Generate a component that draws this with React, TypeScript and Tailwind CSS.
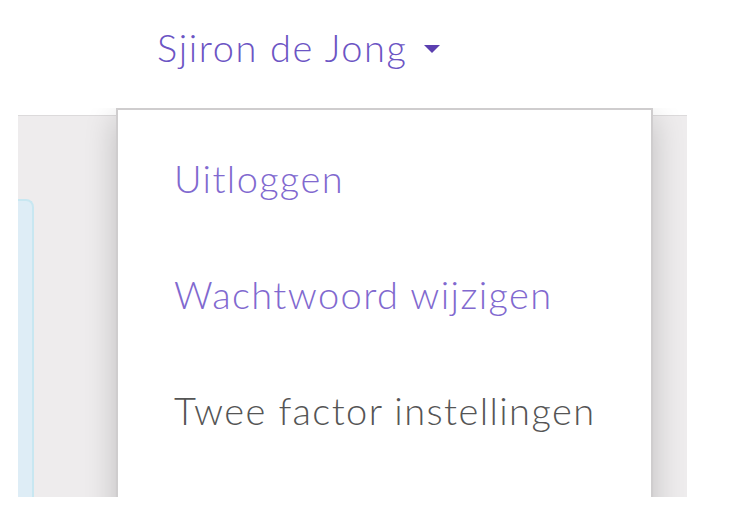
import React from 'react'

const items = [
    { label: 'Uitloggen', active: true },
    { label: 'Wachtwoord wijzigen', active: true },
    { label: 'Twee factor instellingen', active: false },
]

export default function App() {
    return (
        <div className="h-[520px] w-[732px] overflow-hidden bg-white font-['Lato',sans-serif] font-light">
            {/* top bar with user name */}
            <div className="flex h-[108px] items-start pl-[157px] pt-[21px]">
                <button className="flex items-center gap-[16px] text-[38px] leading-[52px] tracking-[1.6px] text-[#6c55c4]">
                    <span>Sjiron de Jong</span>
                    <span className="mt-[4px] h-0 w-0 border-x-[8px] border-t-[8px] border-x-transparent border-t-[#5b3fb0]" />
                </button>
            </div>

            {/* page body, cropped at the bottom */}
            <div className="relative h-[389px] overflow-hidden">
                <div className="ml-[18px] mr-[45px] mt-[7px] h-full border-t border-[#dcdadb] bg-[#eeeced] pt-[83px]">
                    <div className="h-full w-[16px] rounded-tr-[8px] border-2 border-b-0 border-l-0 border-[#c8e7f1] bg-[#deedf6]" />
                </div>

                {/* dropdown menu */}
                <div className="absolute left-[116px] top-0 h-[420px] w-[537px] border-2 border-[#cfcdce] bg-white shadow-[0_10px_30px_rgba(0,0,0,0.2)]">
                    <ul className="flex flex-col pt-[40px]">
                        {items.map(item => (
                            <li
                                key={item.label}
                                className={`h-[116px] pl-[56px] text-[38px] leading-[56px] tracking-[1.4px] ${item.active ? 'text-[#8169cf]' : 'text-[#555555]'}`}
                            >
                                {item.label}
                            </li>
                        ))}
                    </ul>
                </div>
            </div>
        </div>
    )
}
